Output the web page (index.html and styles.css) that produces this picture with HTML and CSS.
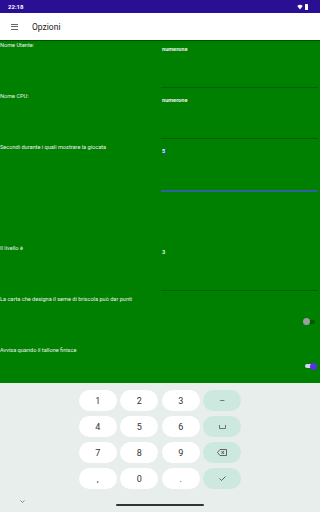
FILE: index.html
```html
<!DOCTYPE html>
<html lang="it">
<head>
    <meta charset="UTF-8">
    <meta name="viewport" content="width=device-width, initial-scale=1.0">
    <title>Opzioni</title>
    <link rel="stylesheet" href="styles.css">
</head>
<body>

<!-- Barra di stato -->
<div class="status-bar">
    <span class="clock">22:18</span>
    <div class="status-icons">
        <svg width="6" height="6" viewBox="0 0 12 12"><path d="M6 11 L0.5 4 A8 8 0 0 1 11.5 4 Z" fill="#fff"/></svg>
        <span class="battery"></span>
    </div>
</div>

<!-- Barra dell'app -->
<div class="app-bar">
    <span class="menu-icon"><i></i><i></i><i></i></span>
    <span class="title">Opzioni</span>
</div>

<!-- Opzioni -->
<div class="options">
    <div class="row">
        <div class="label">Nome Utente:</div>
        <div class="field">numerone</div>
    </div>
    <div class="row">
        <div class="label">Nome CPU:</div>
        <div class="field">numerone</div>
    </div>
    <div class="row tall">
        <div class="label">Secondi durante i quali mostrare la giocata</div>
        <div class="field focused">5<span class="caret"></span></div>
    </div>
    <div class="row">
        <div class="label">Il livello è</div>
        <div class="field">3</div>
    </div>
    <div class="row">
        <div class="label">La carta che designa il seme di briscola può dar punti</div>
        <div class="switch-cell"><span class="switch"></span></div>
    </div>
    <div class="row last">
        <div class="label">Avvisa quando il tallone finisce</div>
        <div class="switch-cell"><span class="switch on"></span></div>
    </div>
</div>

<!-- Tastiera numerica -->
<div class="keyboard">
    <div class="keys">
        <div class="key">1</div>
        <div class="key">2</div>
        <div class="key">3</div>
        <div class="key special">–</div>
        <div class="key">4</div>
        <div class="key">5</div>
        <div class="key">6</div>
        <div class="key special"><svg width="7" height="4" viewBox="0 0 7 4"><path d="M0.5 0 V3.5 H6.5 V0" fill="none" stroke="#555" stroke-width="0.8"/></svg></div>
        <div class="key">7</div>
        <div class="key">8</div>
        <div class="key">9</div>
        <div class="key special"><svg width="10" height="7" viewBox="0 0 10 7"><path d="M3 0.5 H9.5 V6.5 H3 L0.5 3.5 Z M4.5 2 L7 5 M7 2 L4.5 5" fill="none" stroke="#444" stroke-width="0.8"/></svg></div>
        <div class="key">,</div>
        <div class="key">0</div>
        <div class="key">.</div>
        <div class="key special"><svg width="7" height="5" viewBox="0 0 7 5"><path d="M0.5 2.5 L2.5 4.5 L6.5 0.5" fill="none" stroke="#444" stroke-width="0.8"/></svg></div>
    </div>
    <div class="nav">
        <svg class="chevron" width="5" height="3" viewBox="0 0 5 3"><path d="M0.5 0.5 L2.5 2.5 L4.5 0.5" fill="none" stroke="#666" stroke-width="0.7"/></svg>
        <span class="handle"></span>
    </div>
</div>

</body>
</html>
```

FILE: styles.css
```css
body {
    font-family: Roboto, 'Noto Sans', sans-serif;
    margin: 0;
    padding: 0;
    width: 320px;
    height: 512px;
    overflow: hidden;
    background-color: #e7eeeb;
}
.status-bar {
    height: 13px;
    background-color: #2a0f95;
    color: #fff;
    display: flex;
    align-items: center;
    justify-content: space-between;
    padding: 0 12px 0 8px;
    box-sizing: border-box;
}
.clock {
    font-size: 6px;
    font-weight: bold;
}
.status-icons {
    display: flex;
    align-items: center;
    gap: 2px;
}
.battery {
    width: 3px;
    height: 6px;
    background-color: #fff;
    border-radius: 0.5px;
}
.app-bar {
    height: 27px;
    background-color: #fff;
    display: flex;
    align-items: center;
    padding-left: 11px;
    box-shadow: 0 1px 1px rgba(0, 0, 0, 0.2);
    position: relative;
}
.menu-icon {
    display: flex;
    flex-direction: column;
    gap: 1.5px;
    width: 7px;
    margin-right: 14px;
}
.menu-icon i {
    display: block;
    height: 1px;
    background-color: #666;
}
.title {
    font-size: 8.5px;
    color: #222;
}
.options {
    background-color: #008000;
    border-top: 1px solid #006400;
    height: 342px;
    color: #eee;
}
.row {
    display: flex;
    height: 51px;
}
.row.tall {
    height: 101px;
}
.row.last {
    height: 38px;
}
.label {
    width: 161px;
    font-size: 5.6px;
    padding-top: 1px;
    line-height: 7px;
}
.field {
    width: 157px;
    height: 47px;
    box-sizing: border-box;
    border-bottom: 1px solid #0b5c0b;
    font-size: 5.6px;
    font-weight: bold;
    padding: 5px 0 0 1px;
    line-height: 7px;
}
.field.focused {
    border-bottom: 2px solid #2f5f9f;
    height: 49px;
}
.caret {
    display: inline-block;
    width: 1px;
    height: 7px;
    background-color: #3050c0;
    vertical-align: top;
}
.switch-cell {
    flex: 1;
    display: flex;
    justify-content: flex-end;
    align-items: center;
    padding-right: 5px;
    padding-top: 2px;
}
.switch {
    width: 10px;
    height: 4px;
    border-radius: 2px;
    background-color: #005a00;
    position: relative;
}
.switch::after {
    content: '';
    position: absolute;
    width: 7px;
    height: 7px;
    border-radius: 50%;
    background-color: #9e9e9e;
    top: -1.5px;
    left: -2px;
}
.switch.on {
    background-color: #d9d2f7;
}
.switch.on::after {
    background-color: #5a32e6;
    left: 5px;
}
.keyboard {
    height: 129px;
    background-color: #e7eeeb;
    display: flex;
    flex-direction: column;
}
.keys {
    display: grid;
    grid-template-columns: repeat(4, 38px);
    grid-auto-rows: 21px;
    column-gap: 3.5px;
    row-gap: 5px;
    justify-content: center;
    padding-top: 7px;
    padding-left: 0;
}
.key {
    background-color: #fff;
    border-radius: 11px;
    display: flex;
    align-items: center;
    justify-content: center;
    font-size: 9px;
    color: #333;
}
.key.special {
    background-color: #cde8df;
    color: #555;
}
.nav {
    flex: 1;
    display: flex;
    align-items: flex-end;
    padding-bottom: 6px;
    position: relative;
}
.chevron {
    position: absolute;
    left: 20px;
    bottom: 9px;
}
.handle {
    display: block;
    width: 88px;
    height: 2px;
    background-color: #333;
    border-radius: 1px;
    margin-left: 116px;
}
```
